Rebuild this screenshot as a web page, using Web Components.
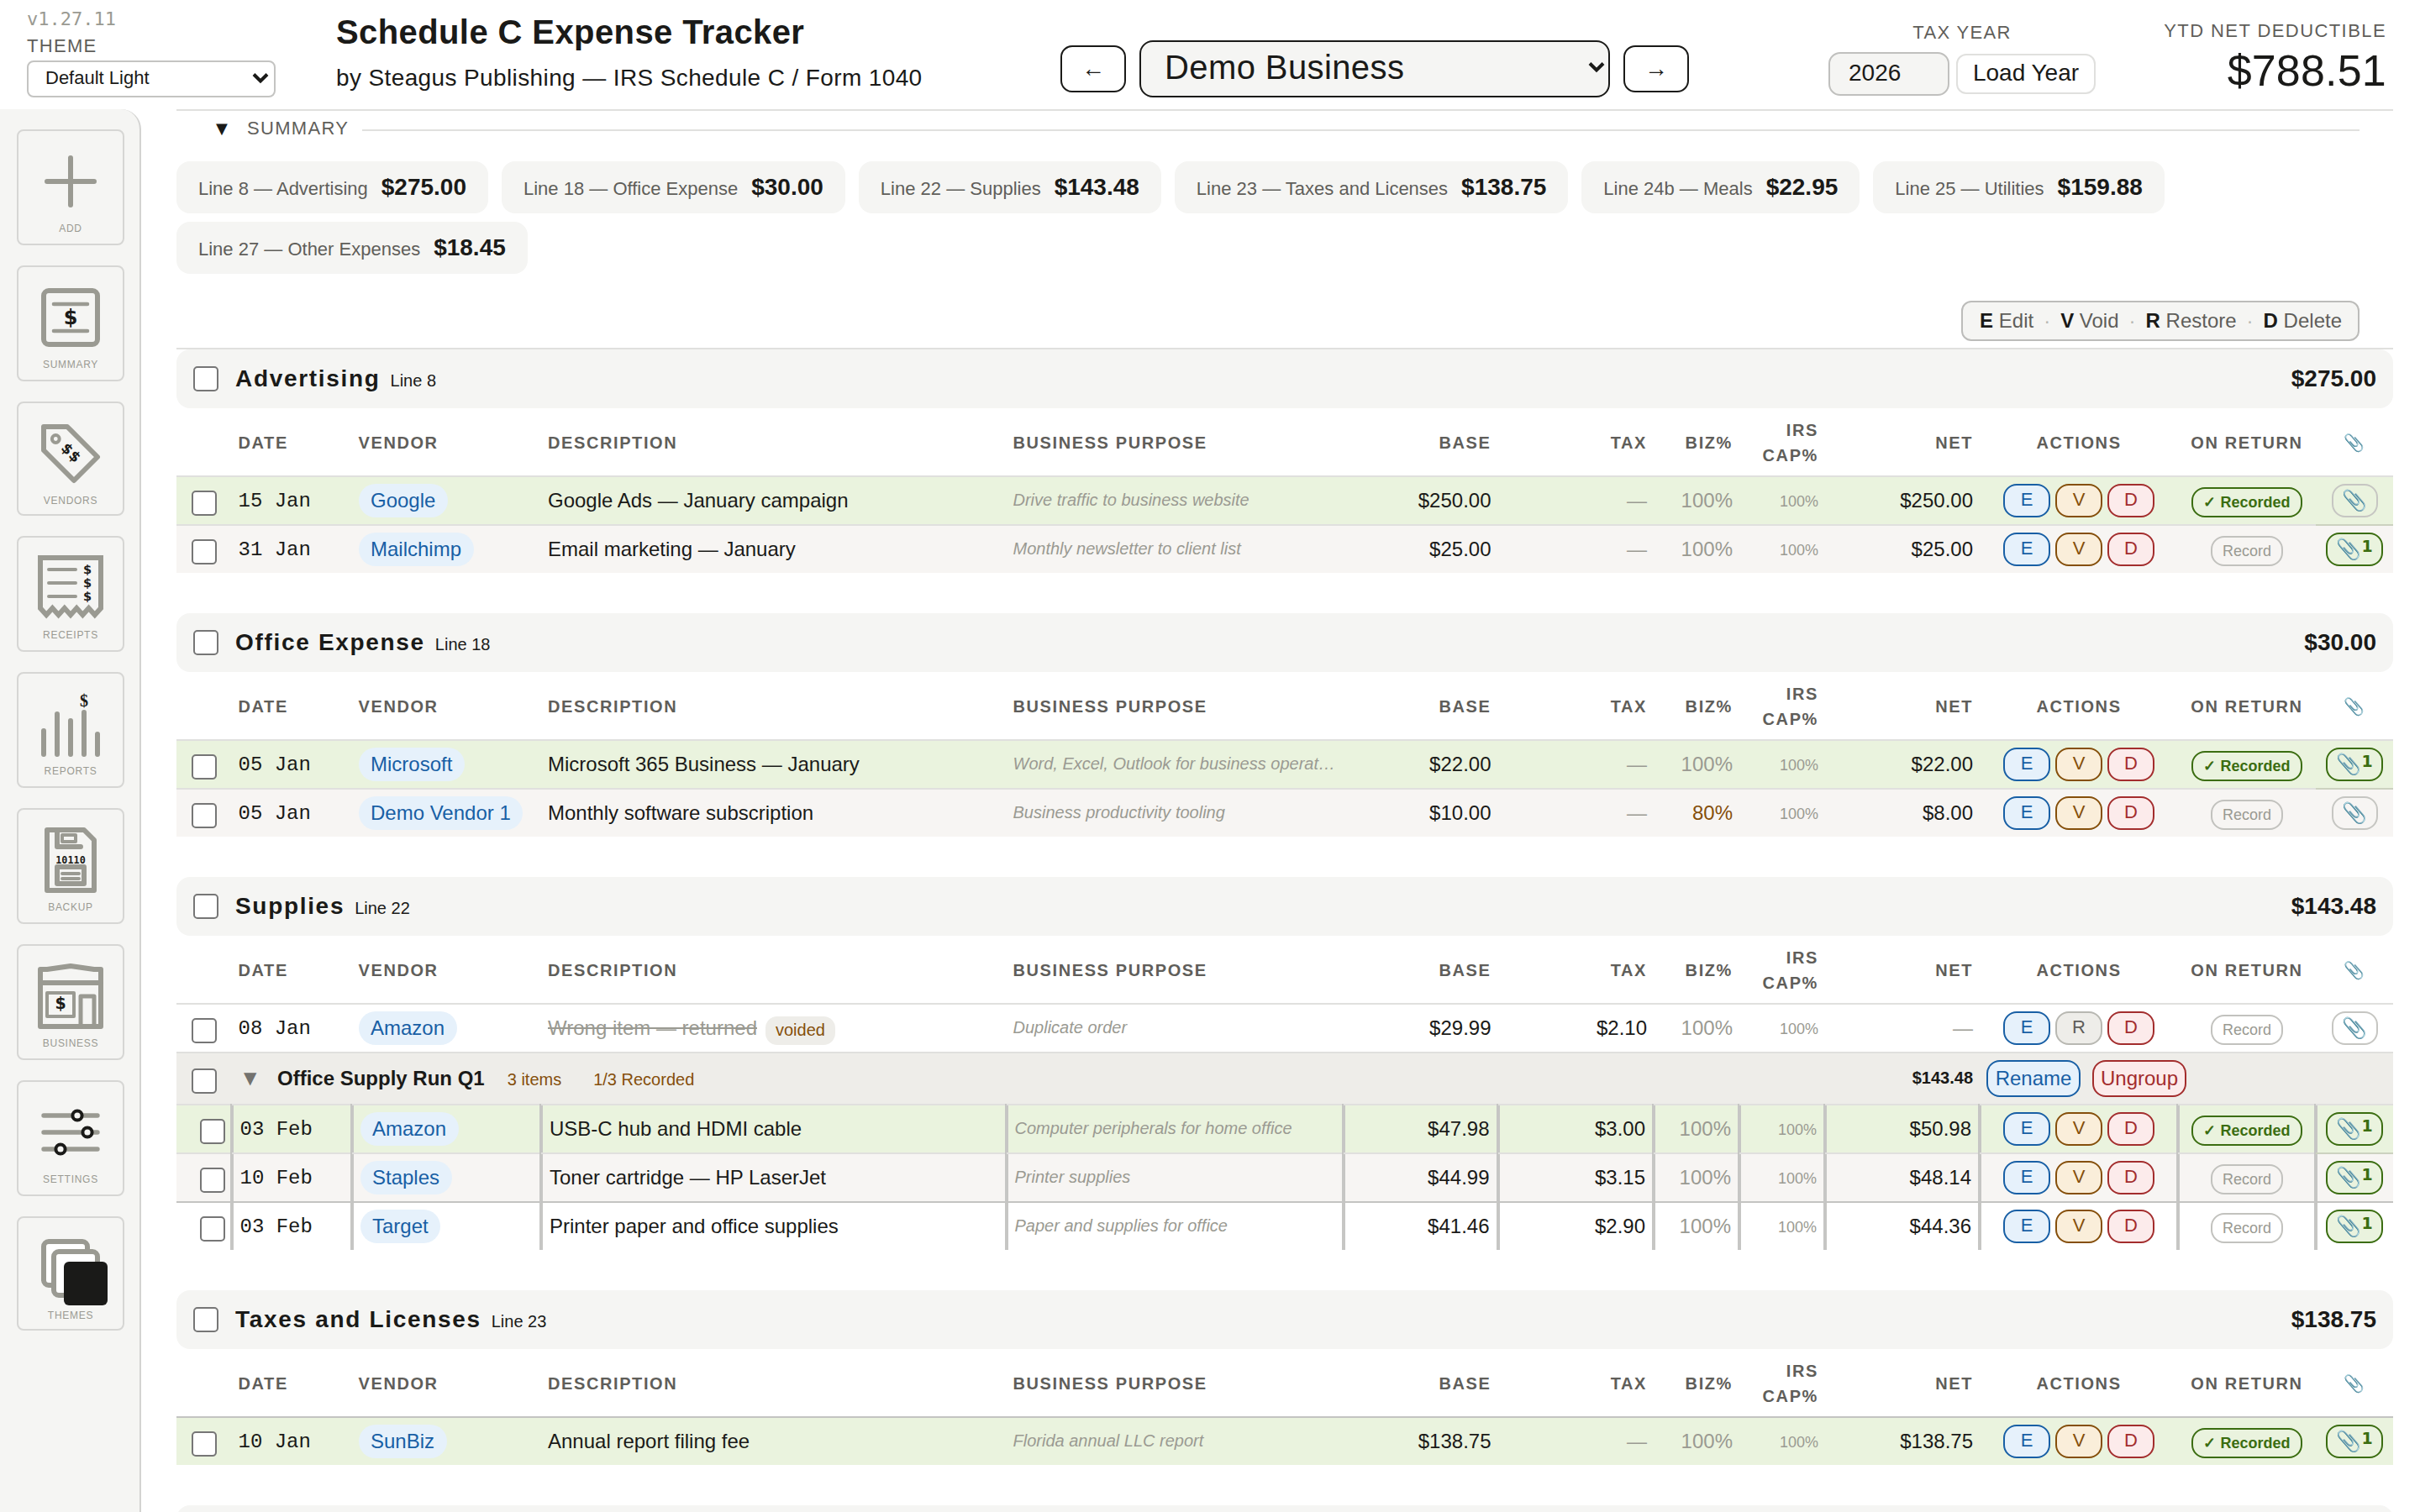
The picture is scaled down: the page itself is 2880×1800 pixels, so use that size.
<!DOCTYPE html>
<html lang="en">
<head>
<meta charset="utf-8">
<title>Schedule C Expense Tracker</title>
<style>
  html, body { margin: 0; padding: 0; }
  body {
    width: 2880px;
    height: 1800px;
    overflow: hidden;
    background: #fff;
    color: #1a1a18;
    font-family: "Liberation Sans", Arial, sans-serif;
    font-size: 24px;
    --ink: #1a1a18;
    --muted: #5f5e5a;
    --faint: #9a9a92;
    --line: #e0e0de;
    --line-strong: #c4c4c2;
    --panel: #f5f5f3;
    --cols: 65.5px 143px 225.5px 553.5px 401px 184px 185.5px 102px 102px 184px 236px 164px 92px;
  }
</style>
</head>
<body>
<expense-app></expense-app>

<script>
// small helper: attach an open root and fill it
function mount(el, html) {
  const template = document.createElement("template");
  template.innerHTML = html;
  el.attachShadow({ mode: "open" });
  el.shadowRoot.appendChild(template.content.cloneNode(true));
}

const CHECKBOX = `
  .check {
    box-sizing: border-box;
    width: 30px;
    height: 30px;
    border: 2px solid #767676;
    border-radius: 5px;
    background: #fff;
    flex: none;
  }
`;

// ---------- header ----------
class AppHeader extends HTMLElement {
  constructor() {
    super();
    mount(this, `
      <style>
        :host {
          display: grid;
          grid-template-columns: 400px 862px 914px 318px 1fr;
          height: 130px;
        }
        .caps { font-size: 22px; letter-spacing: 1.32px; line-height: 24px; color: var(--muted); white-space: nowrap; }
        .theme { padding: 8px 0 0 32px; }
        .version { font: 22px/30px "DejaVu Sans Mono", monospace; color: var(--faint); }
        .theme .caps { line-height: 28px; margin-top: 3px; }
        .select { box-sizing: border-box; display: flex; align-items: center; justify-content: space-between; }
        .theme .select {
          width: 296px; height: 44px; margin-top: 3px; padding: 0 6px 2px 20px;
          border: 2px solid #c4c4c2; border-radius: 8px; font-size: 22px;
        }
        h1 { margin: 14px 0 0; font-size: 40px; line-height: 48px; letter-spacing: .4px; }
        .by { margin-top: 10px; font-size: 28px; line-height: 41px; letter-spacing: .38px; }
        .switcher { display: flex; align-items: center; gap: 16px; height: 68px; margin-top: 48px; }
        .arrow {
          box-sizing: border-box; width: 78px; height: 56px; border: 2px solid var(--ink); border-radius: 14px;
          display: flex; align-items: center; justify-content: center; font-size: 28px;
        }
        .switcher .select {
          width: 560px; height: 68px; padding: 0 4px 4px 28px; border: 2px solid var(--ink);
          border-radius: 16px; background: var(--panel); font-size: 40px; letter-spacing: .4px;
        }
        .year { padding-top: 27px; text-align: center; }
        .year div + div { display: flex; align-items: center; gap: 8px; margin-top: 11px; }
        .input, .load { box-sizing: border-box; display: flex; align-items: center; font-size: 28px; border: 2px solid #c0c0be; }
        .input { width: 144px; height: 52px; padding: 0 0 2px 22px; border-radius: 14px; background: var(--panel); }
        .load { width: 166px; height: 48px; padding-bottom: 2px; justify-content: center; border-color: var(--line); border-radius: 12px; }
        .ytd { padding: 25px 40px 0 0; text-align: right; }
        .ytd .caps { letter-spacing: 1.42px; }
        .total { margin-top: 5px; font-size: 52px; line-height: 60px; letter-spacing: .2px; }
      </style>
      <div class="theme">
        <div class="version">v1.27.11</div>
        <div class="caps">THEME</div>
        <div class="select">Default Light
          <svg width="20" height="14" viewBox="0 0 20 14"><path d="M2 2.5l8 8 8-8" fill="none" stroke="#1a1a18" stroke-width="4"/></svg>
        </div>
      </div>
      <div>
        <h1>Schedule C Expense Tracker</h1>
        <div class="by">by Steagus Publishing — IRS Schedule C / Form 1040</div>
      </div>
      <div class="switcher">
        <div class="arrow">←</div>
        <div class="select">Demo Business
          <svg width="20" height="14" viewBox="0 0 20 14"><path d="M2 2.5l8 8 8-8" fill="none" stroke="#1a1a18" stroke-width="4"/></svg>
        </div>
        <div class="arrow">→</div>
      </div>
      <div class="year">
        <div class="caps">TAX YEAR</div>
        <div><span class="input">2026</span><span class="load">Load Year</span></div>
      </div>
      <div class="ytd">
        <div class="caps">YTD NET DEDUCTIBLE</div>
        <div class="total">$788.51</div>
      </div>
    `);
  }
}
customElements.define("app-header", AppHeader);

// ---------- sidebar ----------
class NavCard extends HTMLElement {
  constructor() {
    super();
    mount(this, `
      <style>
        :host {
          box-sizing: border-box;
          display: flex;
          flex-direction: column;
          align-items: center;
          width: 128px;
          height: 138px;
          padding-top: 20px;
          border: 2px solid #d6d6d4;
          border-radius: 8px;
        }
        :host([short]) { height: 136px; }
        ::slotted(svg) { display: block; width: 80px; height: 80px; overflow: visible; }
        .label { margin-top: 8px; font-size: 12px; line-height: 16px; letter-spacing: .72px; color: var(--faint); }
      </style>
      <slot></slot>
      <div class="label"></div>
    `);
    this.shadowRoot.querySelector(".label").textContent = this.getAttribute("label");
  }
}
customElements.define("nav-card", NavCard);

class SideNav extends HTMLElement {
  constructor() {
    super();
    mount(this, `
      <style>
        :host {
          box-sizing: border-box;
          display: flex;
          flex-direction: column;
          gap: 24px;
          width: 168px;
          height: 1670px;
          padding: 24px 0 0 20px;
          background: var(--panel);
          border-right: 2px solid #d3d3d1;
          border-top-right-radius: 24px;
        }
        svg { fill: none; stroke: #9a9a92; stroke-width: 6; stroke-linecap: round; stroke-linejoin: round; }
        text { fill: #1a1a18; stroke: none; font-family: "DejaVu Sans", sans-serif; font-weight: bold; text-anchor: middle; }
      </style>
      <nav-card label="ADD">
        <svg viewBox="0 0 80 80"><path d="M40 12v56M12 40h56"/></svg>
      </nav-card>
      <nav-card label="SUMMARY">
        <svg viewBox="0 0 80 80">
          <rect x="8" y="8" width="64" height="64" rx="6"/>
          <path d="M20 24h40M20 56h40" stroke-width="4.6"/>
          <text x="40" y="48" font-size="24">$</text>
        </svg>
      </nav-card>
      <nav-card label="VENDORS" short>
        <svg viewBox="0 0 80 80">
          <path d="M8 8h28l36 36-28 28L8 36z"/>
          <circle cx="22.3" cy="22.5" r="4.4" stroke-width="4"/>
          <g transform="translate(41 39) rotate(45)"><text x="0" y="6" font-size="17" letter-spacing=".8">$$</text></g>
        </svg>
      </nav-card>
      <nav-card label="RECEIPTS">
        <svg viewBox="0 0 80 80">
          <path d="M4 4h72v60l-7.2 8-7.2-8-7.2 8-7.2-8-7.2 8-7.2-8-7.2 8-7.2-8-7.2 8L4 64z" stroke-linejoin="miter"/>
          <path d="M14 18h32M14 34h32M14 50h32" stroke-width="4"/>
          <text x="60" y="23" font-size="14.5">$</text><text x="60" y="39" font-size="14.5">$</text><text x="60" y="55" font-size="14.5">$</text>
        </svg>
      </nav-card>
      <nav-card label="REPORTS">
        <svg viewBox="0 0 80 80">
          <path d="M8 48v28M24 28v48M40 36v40M56 26v50M72 52v24"/>
          <text x="56" y="19" font-size="20" style="font-family:'Liberation Serif',serif">$</text>
        </svg>
      </nav-card>
      <nav-card label="BACKUP">
        <svg viewBox="0 0 80 80">
          <path d="M12 4h44l12 12v60H12z"/>
          <path d="M24 4v20h28"/>
          <rect x="30" y="10" width="16" height="8" stroke-width="4"/>
          <rect x="24" y="48" width="32" height="20"/>
          <path d="M30 56h20M30 62h20" stroke-width="4"/>
          <text x="40" y="44.3" font-size="11.8" style="font-family:'DejaVu Sans Mono',monospace">10110</text>
        </svg>
      </nav-card>
      <nav-card label="BUSINESS">
        <svg viewBox="0 0 80 80">
          <path d="M4 76V8h8l28-4 28 4h8v68z"/>
          <path d="M4 24h72"/>
          <rect x="12" y="36" width="32" height="28" stroke-width="4"/>
          <path d="M52 76V40h16v36" stroke-width="5"/>
          <text x="28" y="55" font-size="19">$</text>
        </svg>
      </nav-card>
      <nav-card label="SETTINGS">
        <svg viewBox="0 0 80 80">
          <path d="M8 20h64M8 40h64M8 60h64" stroke-width="5.4"/>
          <g stroke="#1a1a18" stroke-width="4" fill="#f5f5f3"><circle cx="48" cy="20" r="5.6"/><circle cx="60" cy="40" r="5.6"/><circle cx="28" cy="60" r="5.6"/></g>
        </svg>
      </nav-card>
      <nav-card label="THEMES" short>
        <svg viewBox="0 0 80 80">
          <rect x="8" y="8" width="52" height="52" rx="6" fill="#fff"/>
          <rect x="20" y="20" width="52" height="52" rx="6" fill="#fff"/>
          <rect x="32" y="32" width="52" height="52" rx="6" fill="#1a1a18" stroke="none"/>
        </svg>
      </nav-card>
    `);
  }
}
customElements.define("side-nav", SideNav);

// ---------- summary ----------
class LinePill extends HTMLElement {
  constructor() {
    super();
    mount(this, `
      <style>
        :host {
          box-sizing: border-box;
          display: flex;
          align-items: baseline;
          gap: 16px;
          height: 62px;
          padding: 0 26px;
          line-height: 61px;
          border-radius: 16px;
          background: var(--panel);
          white-space: nowrap;
        }
        .label { font-size: 22px; color: var(--muted); }
        .amount { font-size: 28px; font-weight: bold; }
      </style>
      <span class="label"><slot></slot></span>
      <span class="amount"></span>
    `);
    this.shadowRoot.querySelector(".amount").textContent = this.getAttribute("amount");
  }
}
customElements.define("line-pill", LinePill);

class SummaryPanel extends HTMLElement {
  constructor() {
    super();
    mount(this, `
      <style>
        :host { display: block; border-top: 2px solid var(--line); }
        .title { display: flex; align-items: center; height: 46px; padding: 0 40px 0 47px; }
        .tri { width: 37px; font: 18px/24px "DejaVu Sans", sans-serif; margin-top: -4px; }
        .name { font-size: 22px; line-height: 24px; letter-spacing: 1.32px; color: var(--muted); margin: -5px 16px 0 0; }
        .rule { flex: 1; height: 2px; background: var(--line); }
        .pills { display: flex; flex-wrap: wrap; gap: 10px 16px; margin-top: 14px; }
      </style>
      <div class="title"><span class="tri">▼</span><span class="name">SUMMARY</span><span class="rule"></span></div>
      <div class="pills"><slot></slot></div>
    `);
  }
}
customElements.define("summary-panel", SummaryPanel);

class KeyLegend extends HTMLElement {
  constructor() {
    super();
    mount(this, `
      <style>
        :host { display: flex; justify-content: flex-end; padding: 32px 40px 8px 0; border-bottom: 2px solid var(--line); }
        .box {
          box-sizing: border-box;
          display: flex;
          align-items: center;
          gap: 12px;
          height: 48px;
          padding: 0 19px 0 20px;
          border: 2px solid #bcbcba;
          border-radius: 12px;
          background: var(--panel);
          color: var(--muted);
        }
        b { color: var(--ink); }
        i { font-style: normal; color: #b8b8b4; }
      </style>
      <div class="box">
        <span><b>E</b> Edit</span><i>·</i><span><b>V</b> Void</span><i>·</i><span><b>R</b> Restore</span><i>·</i><span><b>D</b> Delete</span>
      </div>
    `);
  }
}
customElements.define("key-legend", KeyLegend);

// ---------- table pieces ----------
class ActionButton extends HTMLElement {
  constructor() {
    super();
    mount(this, `
      <style>
        :host {
          box-sizing: border-box;
          display: flex;
          align-items: center;
          justify-content: center;
          width: 56px;
          height: 40px;
          padding-bottom: 3px;
          border: 2px solid;
          border-radius: 16px;
          font-size: 22px;
        }
        :host([wide]) { width: 112px; height: 44px; font-size: 24px; padding-bottom: 0; }
        :host([kind="E"]) { color: #185fa5; background: #e6f1fb; }
        :host([kind="V"]) { color: #854f0b; background: #faeeda; }
        :host([kind="D"]) { color: #a32d2d; background: #fcebeb; }
        :host([kind="R"]) { color: #5f5e5a; background: #eeede9; border-color: #b8b8b2; }
      </style>
      <slot></slot>
    `);
  }
}
customElements.define("action-button", ActionButton);

class ExpenseRow extends HTMLElement {
  connectedCallback() {
    const get = (name) => this.getAttribute(name) || "";
    const has = (name) => this.hasAttribute(name);
    const second = has("voided") ? "R" : "V";
    mount(this, `
      <style>
        :host { display: grid; grid-template-columns: var(--cols); height: 58px; }
        :host([alt]) { background: #f7f5f3; }
        :host([recorded]) { background: #eaf3de; }
        .cell {
          box-sizing: border-box;
          min-width: 0;
          display: flex;
          align-items: center;
          padding: 0 8px;
          border-top: 2px solid var(--line);
          white-space: nowrap;
        }
        :host([strong]) .cell { border-top-color: var(--line-strong); }
        :host([after-recorded]) .cell:last-child { border-top-color: #ccd2c0; }
        .r { justify-content: flex-end; }
        .c { justify-content: center; }
        ${CHECKBOX}
        .cell:first-of-type { padding: 6px 0 0 18px; }
        .date { font-family: "Liberation Mono", "Courier New", monospace; }
        .vendor { box-sizing: border-box; height: 40px; padding: 0 14.5px; line-height: 40px; border-radius: 20px; background: #e6f1fb; color: #185fa5; }
        .purpose { font-size: 20px; font-style: italic; color: var(--faint); padding-bottom: 2px; }
        .faint { color: var(--faint); }
        .partial { color: #854f0b; }
        .cap { font-size: 18px; padding-top: 3px; }
        .acts { gap: 6px; }
        s { color: var(--faint); }
        .void { margin: 5px 0 0 10px; padding: 0 12px; font-size: 20px; line-height: 34px; height: 34px; line-height: 33px; border-radius: 14px; background: #eeede9; color: #854f0b; }
        .state {
          box-sizing: border-box; height: 36px; margin-top: 4px; padding: 0 12px; line-height: 32px;
          border: 2px solid #c2c2be; border-radius: 16px; font-size: 18px; color: var(--faint);
        }
        .state.done { border-color: #3b6d11; color: #3b6d11; font-weight: bold; }
        .clip {
          box-sizing: border-box; display: flex; height: 40px; padding: 0 10.5px; line-height: 36px;
          border: 2px solid #c6c6c2; border-radius: 16px;
        }
        .clip.full { border-color: #3b6d11; background: #eaf3de; }
        sup { font: bold 19px/28px "DejaVu Sans", sans-serif; color: #3b6d11; }

        /* rows inside a group: thick column rules */
        :host([grouped]) .cell + .cell { box-shadow: -2px 0 0 #c6c6c4, inset 2px 0 0 #c6c6c4; padding: 0 10px; }
        :host([grouped]) .cell:first-of-type { padding-left: 28px; }
        :host([grouped]) .cell.purpose { padding-bottom: 2px; }
        :host([grouped]) .cell.cap { padding-top: 3px; }
      </style>
      <div class="cell"><span class="check"></span></div>
      <div class="cell date">${get("date")}</div>
      <div class="cell"><span class="vendor">${get("vendor")}</span></div>
      <div class="cell">${has("voided") ? `<s>${get("desc")}</s><span class="void">voided</span>` : get("desc")}</div>
      <div class="cell purpose">${get("purpose")}</div>
      <div class="cell r">${get("base")}</div>
      <div class="cell r ${get("tax") ? "" : "faint"}">${get("tax") || "—"}</div>
      <div class="cell r ${get("biz") ? "partial" : "faint"}">${get("biz") || "100%"}</div>
      <div class="cell r faint cap">100%</div>
      <div class="cell r ${get("net") ? "" : "faint"}">${get("net") || "—"}</div>
      <div class="cell c acts">
        <action-button kind="E">E</action-button><action-button kind="${second}">${second}</action-button><action-button kind="D">D</action-button>
      </div>
      <div class="cell c">${has("recorded") ? `<span class="state done">✓ Recorded</span>` : `<span class="state">Record</span>`}</div>
      <div class="cell c">${has("files") ? `<span class="clip full">📎<sup>1</sup></span>` : `<span class="clip">📎</span>`}</div>
    `);
  }
}
customElements.define("expense-row", ExpenseRow);

// collapsible bundle of rows
class BundleRow extends HTMLElement {
  connectedCallback() {
    mount(this, `
      <style>
        :host {
          box-sizing: border-box;
          display: grid;
          grid-template-columns: 80px 1fr 492px;
          align-items: center;
          height: 62px;
          border-top: 2px solid var(--line);
          background: #eeede9;
        }
        ${CHECKBOX}
        .check { margin: 6px 0 0 18px; }
        .info { display: flex; align-items: baseline; }
        .tri { width: 40px; font: 20px/24px "DejaVu Sans", sans-serif; color: #73726e; position: relative; top: -2px; }
        small { font-size: 20px; color: #854f0b; }
        .name { margin-right: 27px; }
        .items { margin-right: 38px; }
        .sum { margin: 0 8px 0 auto; font-size: 20px; font-weight: bold; position: relative; top: -2px; }
        .acts { display: flex; gap: 14px; padding-left: 8px; }
      </style>
      <span class="check"></span>
      <div class="info">
        <span class="tri">▼</span>
        <b class="name">${this.getAttribute("name")}</b>
        <small class="items">${this.getAttribute("items")}</small>
        <small>${this.getAttribute("recorded")}</small>
        <span class="sum">${this.getAttribute("sum")}</span>
      </div>
      <div class="acts"><action-button wide kind="E">Rename</action-button><action-button wide kind="D">Ungroup</action-button></div>
    `);
  }
}
customElements.define("bundle-row", BundleRow);

class ExpenseGroup extends HTMLElement {
  connectedCallback() {
    // a group without a name is only its empty header bar
    const named = this.hasAttribute("name");
    mount(this, `
      <style>
        :host { display: block; margin-bottom: 48px; }
        ${CHECKBOX}
        .head {
          box-sizing: border-box;
          display: flex;
          align-items: center;
          height: 70px;
          padding: 0 20px;
          border-radius: 16px;
          background: var(--panel);
          font-size: 28px;
          font-weight: bold;
        }
        .name { flex: 1; margin-left: 20px; letter-spacing: 1.68px; }
        .name small { margin-left: 12px; font-size: 20px; font-weight: normal; letter-spacing: 0; }
        .cols { box-sizing: border-box; display: grid; grid-template-columns: var(--cols); height: 80px; padding-top: 1px; align-items: center; }
        .cols span { padding: 0 8px; font-size: 20px; font-weight: bold; line-height: 30px; letter-spacing: 1.6px; color: var(--muted); }
        .cols .r { text-align: right; }
        .cols .c { padding: 0; text-align: center; }
      </style>
      <div class="head">
        ${named ? `
        <span class="check"></span>
        <span class="name">${this.getAttribute("name")}<small>${this.getAttribute("line")}</small></span>
        <span>${this.getAttribute("total")}</span>` : ""}
      </div>
      ${named ? `
      <div class="cols">
        <span></span><span>DATE</span><span>VENDOR</span><span>DESCRIPTION</span><span>BUSINESS PURPOSE</span>
        <span class="r">BASE</span><span class="r">TAX</span><span class="r">BIZ%</span><span class="r">IRS CAP%</span><span class="r">NET</span>
        <span class="c">ACTIONS</span><span class="c">ON RETURN</span><span class="c">📎</span>
      </div>` : ""}
      <slot></slot>
    `);
  }
}
customElements.define("expense-group", ExpenseGroup);

// ---------- page ----------
class ExpenseApp extends HTMLElement {
  constructor() {
    super();
    mount(this, `
      <style>
        :host { display: block; height: 1800px; overflow: hidden; }
        .body { display: flex; gap: 42px; }
        main { width: 2638px; }
      </style>
      <app-header></app-header>
      <div class="body">
        <side-nav></side-nav>
        <main>
          <summary-panel>
            <line-pill amount="$275.00">Line 8 — Advertising</line-pill>
            <line-pill amount="$30.00">Line 18 — Office Expense</line-pill>
            <line-pill amount="$143.48">Line 22 — Supplies</line-pill>
            <line-pill amount="$138.75">Line 23 — Taxes and Licenses</line-pill>
            <line-pill amount="$22.95">Line 24b — Meals</line-pill>
            <line-pill amount="$159.88">Line 25 — Utilities</line-pill>
            <line-pill amount="$18.45">Line 27 — Other Expenses</line-pill>
          </summary-panel>
          <key-legend></key-legend>
          <expense-group name="Advertising" line="Line 8" total="$275.00">
            <expense-row recorded date="15 Jan" vendor="Google" desc="Google Ads — January campaign" purpose="Drive traffic to business website" base="$250.00" net="$250.00"></expense-row>
            <expense-row alt after-recorded files date="31 Jan" vendor="Mailchimp" desc="Email marketing — January" purpose="Monthly newsletter to client list" base="$25.00" net="$25.00"></expense-row>
          </expense-group>
          <expense-group name="Office Expense" line="Line 18" total="$30.00">
            <expense-row recorded files date="05 Jan" vendor="Microsoft" desc="Microsoft 365 Business — January" purpose="Word, Excel, Outlook for business operat…" base="$22.00" net="$22.00"></expense-row>
            <expense-row alt after-recorded date="05 Jan" vendor="Demo Vendor 1" desc="Monthly software subscription" purpose="Business productivity tooling" base="$10.00" biz="80%" net="$8.00"></expense-row>
          </expense-group>
          <expense-group name="Supplies" line="Line 22" total="$143.48">
            <expense-row voided date="08 Jan" vendor="Amazon" desc="Wrong item — returned" purpose="Duplicate order" base="$29.99" tax="$2.10"></expense-row>
            <bundle-row name="Office Supply Run Q1" items="3 items" recorded="1/3 Recorded" sum="$143.48"></bundle-row>
            <expense-row grouped recorded files date="03 Feb" vendor="Amazon" desc="USB-C hub and HDMI cable" purpose="Computer peripherals for home office" base="$47.98" tax="$3.00" net="$50.98"></expense-row>
            <expense-row grouped alt after-recorded files date="10 Feb" vendor="Staples" desc="Toner cartridge — HP LaserJet" purpose="Printer supplies" base="$44.99" tax="$3.15" net="$48.14"></expense-row>
            <expense-row grouped strong files date="03 Feb" vendor="Target" desc="Printer paper and office supplies" purpose="Paper and supplies for office" base="$41.46" tax="$2.90" net="$44.36"></expense-row>
          </expense-group>
          <expense-group name="Taxes and Licenses" line="Line 23" total="$138.75">
            <expense-row strong recorded files date="10 Jan" vendor="SunBiz" desc="Annual report filing fee" purpose="Florida annual LLC report" base="$138.75" net="$138.75"></expense-row>
          </expense-group>
          <expense-group></expense-group>
        </main>
      </div>
    `);
  }
}
customElements.define("expense-app", ExpenseApp);
</script>
</body>
</html>
